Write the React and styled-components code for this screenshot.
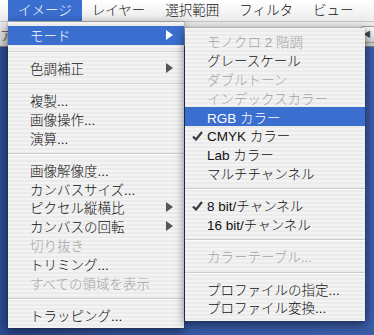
import styled, { createGlobalStyle } from "styled-components";

const GlobalStyle = createGlobalStyle`
  html, body {
    margin: 0;
    padding: 0;
  }
  body {
    width: 374px;
    height: 335px;
    overflow: hidden;
    font-family: "Liberation Sans", "Noto Sans CJK JP", sans-serif;
  }
`;

const Desktop = styled.div`
  position: relative;
  width: 374px;
  height: 335px;
  overflow: hidden;
  background: linear-gradient(90deg, #2b4a8e 0%, #3659a4 30%, #3a5ca8 100%);
`;

const MenuBar = styled.div`
  display: flex;
  height: 22px;
  padding-left: 8px;
  background: linear-gradient(#ffffff, #ececec);
  border-bottom: 1px solid #c4c4c4;
  box-sizing: border-box;
`;

const BarItem = styled.div`
  padding: 0 10px;
  height: 21px;
  line-height: 21px;
  font-size: 13.5px;
  font-weight: 300;
  color: ${(p) => (p.$active ? "#ffffff" : "#111111")};
  background: ${(p) => (p.$active ? "#3a6ecf" : "transparent")};
`;

const WindowBar = styled.div`
  display: flex;
  justify-content: space-between;
  align-items: center;
  height: 24px;
  background: linear-gradient(#ececec, #cdcdcd);
  border-bottom: 1px solid #7d7d7d;
`;

const CutLabel = styled.span`
  margin-left: 0;
  font-size: 13px;
  color: #6a6a6a;
`;

const ToolButton = styled.div`
  width: 14px;
  height: 15px;
  margin-right: -4px;
  border: 1px solid #9a9a9a;
  border-radius: 3px;
  background: linear-gradient(#fafafa, #d4d4d4);
  font-size: 8px;
  line-height: 15px;
  color: #444;
  padding-left: 2px;
`;

const Menu = styled.div`
  position: absolute;
  top: ${(p) => p.$top}px;
  left: ${(p) => p.$left}px;
  width: ${(p) => p.$width}px;
  padding: 4px 0;
  background: repeating-linear-gradient(
    180deg,
    #f3f3f3 0px,
    #f3f3f3 2px,
    #ebebeb 2px,
    #ebebeb 4px
  );
  box-shadow: 0 3px 10px rgba(0, 0, 0, 0.55), 0 0 0 1px rgba(0, 0, 0, 0.08);
  z-index: ${(p) => p.$z};
`;

const Item = styled.div`
  position: relative;
  display: flex;
  align-items: center;
  justify-content: space-between;
  height: 18.8px;
  padding: 0 11px 0 22px;
  font-size: 13.5px;
  font-weight: 300;
  color: ${(p) => (p.$active ? "#ffffff" : p.$disabled ? "#a3a3a3" : "#111111")};
  background: ${(p) => (p.$active ? "#3a6ecf" : "transparent")};
  white-space: nowrap;
`;

const Check = styled.svg`
  position: absolute;
  left: 7px;
  top: 5px;
`;

const Separator = styled.div`
  height: 1px;
  margin: 6px 0 5.5px;
  background: #cdcdcd;
  border-bottom: 1px solid #fbfbfb;
`;

const Arrow = styled.span`
  width: 0;
  height: 0;
  border-top: 5px solid transparent;
  border-bottom: 5px solid transparent;
  border-left: 7px solid ${(p) => (p.$active ? "#ffffff" : "#555555")};
`;

const mainMenu = [
  { label: "モード", arrow: true, active: true },
  { sep: true },
  { label: "色調補正", arrow: true },
  { sep: true },
  { label: "複製..." },
  { label: "画像操作..." },
  { label: "演算..." },
  { sep: true },
  { label: "画像解像度..." },
  { label: "カンバスサイズ..." },
  { label: "ピクセル縦横比", arrow: true },
  { label: "カンバスの回転", arrow: true },
  { label: "切り抜き", disabled: true },
  { label: "トリミング..." },
  { label: "すべての領域を表示", disabled: true },
  { sep: true },
  { label: "トラッピング..." },
];

const modeMenu = [
  { label: "モノクロ 2 階調", disabled: true },
  { label: "グレースケール" },
  { label: "ダブルトーン", disabled: true },
  { label: "インデックスカラー", disabled: true },
  { label: "RGB カラー", active: true },
  { label: "CMYK カラー", checked: true },
  { label: "Lab カラー" },
  { label: "マルチチャンネル" },
  { sep: true },
  { label: "8 bit/チャンネル", checked: true },
  { label: "16 bit/チャンネル" },
  { sep: true },
  { label: "カラーテーブル...", disabled: true },
  { sep: true },
  { label: "プロファイルの指定..." },
  { label: "プロファイル変換..." },
];

function MenuList({ items }) {
  return items.map((it, i) =>
    it.sep ? (
      <Separator key={i} />
    ) : (
      <Item key={i} $active={it.active} $disabled={it.disabled}>
        {it.checked && (
          <Check width="11" height="10" viewBox="0 0 11 10">
            <path d="M1 5.5 L4 8.5 L10 1" fill="none" stroke="#3c3c3c" strokeWidth="2.2" />
          </Check>
        )}
        <span>{it.label}</span>
        {it.arrow && <Arrow $active={it.active} />}
      </Item>
    )
  );
}

export default function App() {
  return (
    <Desktop>
      <GlobalStyle />
      <MenuBar>
        <BarItem $active>イメージ</BarItem>
        <BarItem>レイヤー</BarItem>
        <BarItem>選択範囲</BarItem>
        <BarItem>フィルタ</BarItem>
        <BarItem>ビュー</BarItem>
      </MenuBar>
      <WindowBar>
        <CutLabel>ア</CutLabel>
        <ToolButton>◀</ToolButton>
      </WindowBar>
      <Menu $top={22} $left={8} $width={176} $z={1}>
        <MenuList items={mainMenu} />
      </Menu>
      <Menu $top={28} $left={185} $width={180} $z={2}>
        <MenuList items={modeMenu} />
      </Menu>
    </Desktop>
  );
}
